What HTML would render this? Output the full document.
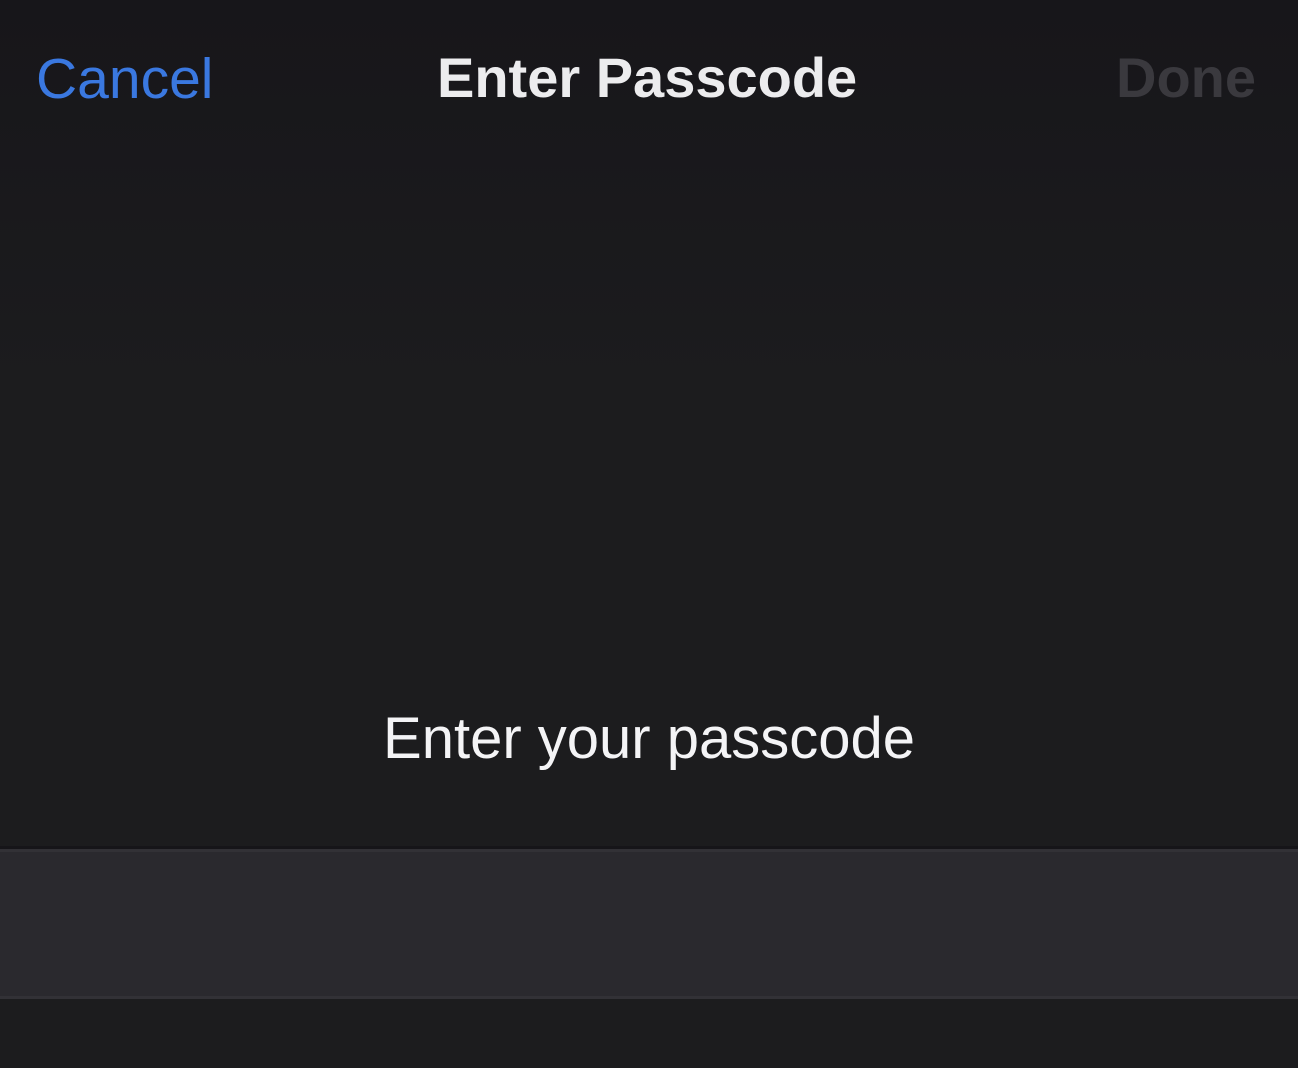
<!DOCTYPE html>
<html><head><meta charset="utf-8"><style>
html,body{margin:0;padding:0;width:1298px;height:1068px;overflow:hidden;background:#1c1c1e;font-family:"Liberation Sans",sans-serif;}
.top{position:absolute;left:0;top:0;width:1298px;height:400px;background:linear-gradient(#17161a,#1c1c1e);}
.t{position:absolute;white-space:nowrap;line-height:1;}
.band{position:absolute;left:0;top:849px;width:1298px;height:150px;background:#2a292e;border-top:3px solid #323136;border-bottom:3px solid #323136;box-sizing:border-box;}
.sep{position:absolute;left:0;top:846px;width:1298px;height:3px;background:#161519;}
</style></head><body>
<div class="top"></div>
<div class="t" style="left:36px;top:51px;font-size:57px;color:#3a78e0;">Cancel</div>
<div class="t" style="left:437px;top:50px;font-size:56px;font-weight:bold;color:#ececee;width:418px;text-align:center;">Enter Passcode</div>
<div class="t" style="right:42px;top:50px;font-size:56px;font-weight:bold;color:#3a393e;">Done</div>
<div class="t" style="left:0;width:1298px;text-align:center;top:710px;font-size:58px;color:#f4f4f6;">Enter your passcode</div>
<div class="sep"></div>
<div class="band"></div>
</body></html>
